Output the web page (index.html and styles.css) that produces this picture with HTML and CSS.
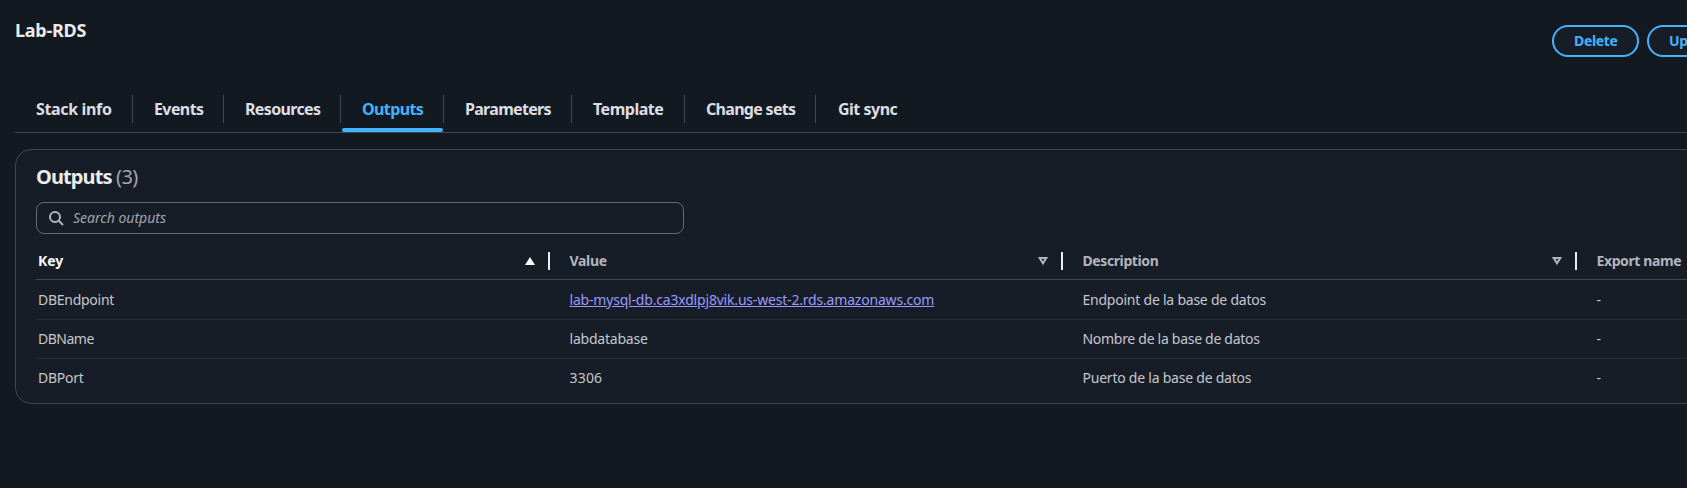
FILE: index.html
```html
<!DOCTYPE html>
<html lang="en">
<head>
<meta charset="utf-8">
<title>Lab-RDS</title>
<link rel="stylesheet" href="styles.css">
</head>
<body>
<main class="page">
  <header class="stack-header">
    <h1 class="stack-title">Lab-RDS</h1>
    <div class="actions">
      <button class="btn">Delete</button>
      <button class="btn">Update</button>
    </div>
  </header>
  <nav class="tabs">
    <a class="tab tab-info">Stack info</a>
    <a class="tab tab-events">Events</a>
    <a class="tab tab-resources">Resources</a>
    <a class="tab tab-outputs active">Outputs</a>
    <a class="tab tab-parameters">Parameters</a>
    <a class="tab tab-template">Template</a>
    <a class="tab tab-changes">Change sets</a>
    <a class="tab tab-git">Git sync</a>
  </nav>
  <section class="panel">
    <h2 class="panel-title">Outputs <span class="counter">(3)</span></h2>
    <div class="search">
      <svg class="search-icon" viewBox="0 0 16 16"><circle cx="7" cy="7" r="5"/><path d="m15 15-4.5-4.5"/></svg>
      <span class="placeholder">Search outputs</span>
    </div>
    <div class="table">
      <div class="row head">
        <div class="cell sorted"><span class="h-key">Key</span><svg class="sort filled" viewBox="0 0 10 8"><path d="M5 0 10 8H0z"/></svg></div>
        <div class="cell"><span class="h-value">Value</span><svg class="sort" viewBox="0 0 10 8"><path d="M1.7 1h6.6L5 6.3z"/></svg></div>
        <div class="cell"><span class="h-desc">Description</span><svg class="sort" viewBox="0 0 10 8"><path d="M1.7 1h6.6L5 6.3z"/></svg></div>
        <div class="cell"><span class="h-export">Export name</span></div>
      </div>
      <div class="row">
        <div class="cell"><span class="k1">DBEndpoint</span></div>
        <div class="cell"><a class="link">lab-mysql-db.ca3xdlpj8vik.us-west-2.rds.amazonaws.com</a></div>
        <div class="cell"><span class="d1">Endpoint de la base de datos</span></div>
        <div class="cell">-</div>
      </div>
      <div class="row">
        <div class="cell"><span class="k2">DBName</span></div>
        <div class="cell"><span class="v2">labdatabase</span></div>
        <div class="cell"><span class="d2">Nombre de la base de datos</span></div>
        <div class="cell">-</div>
      </div>
      <div class="row">
        <div class="cell"><span class="k3">DBPort</span></div>
        <div class="cell"><span class="v3">3306</span></div>
        <div class="cell"><span class="d3">Puerto de la base de datos</span></div>
        <div class="cell">-</div>
      </div>
    </div>
  </section>
</main>
</body>
</html>
```

FILE: styles.css
```css
* { box-sizing: border-box; }
html, body { margin: 0; height: 100%; overflow: hidden; }
body { background: #131920; color: #c6c6cd; font: 14px/20px "Noto Sans", "Open Sans", sans-serif; }
.page { padding-left: 15px; white-space: nowrap; overflow: hidden; height: 488px; }
.stack-header { height: 88px; display: flex; justify-content: space-between; }
.stack-title { margin: 18px 0 0; font-size: 18px; line-height: 24px; color: #ebebf0; letter-spacing: -0.25px; }
.actions { display: flex; gap: 8px; padding-top: 25px; width: 135px; }
.btn { flex: none; height: 32px; padding: 0 20px; border: 2px solid #42b4ff; border-radius: 20px; background: #161d26; color: #42b4ff; font: bold 14px/20px "Noto Sans", sans-serif; width: 87px; letter-spacing: -0.35px; }
.tabs { display: flex; height: 45px; padding-top: 7px; border-bottom: 1px solid #424650; }
.tab { position: relative; height: 37px; padding-left: 21px; font-size: 16px; line-height: 29px; font-weight: bold; color: #dedee3; letter-spacing: -0.5px; }
.tab::after { content: ""; position: absolute; right: 0; top: 0; width: 1px; height: 28px; background: #424650; }
.tab-git::after { display: none; }
.tab.active { color: #42b4ff; }
.tab.active::before { content: ""; position: absolute; left: 1px; right: 1px; bottom: 0; height: 4px; border-radius: 2px; background: #42b4ff; }
.tab-info { width: 118px; letter-spacing: -0.35px; }
.tab-events { width: 91px; letter-spacing: -0.6px; }
.tab-resources { width: 117px; letter-spacing: -0.65px; }
.tab-outputs { width: 103px; letter-spacing: -0.6px; }
.tab-parameters { width: 128px; letter-spacing: -0.7px; }
.tab-template { width: 113px; }
.tab-changes { width: 131px; letter-spacing: -0.7px; }
.tab-git { padding-left: 22px; }
.panel { margin: 16px -30px 0 0; height: 255px; padding: 15px 0 0 20px; border: 1px solid #424650; border-radius: 16px; background: #161d26; }
.panel-title { margin: 0; font-size: 20px; line-height: 24px; color: #ebebf0; letter-spacing: -0.9px; }
.counter { font-weight: normal; color: #a4a4ad; letter-spacing: -0.5px; }
.search { display: flex; align-items: center; width: 648px; height: 32px; margin-top: 13px; padding-left: 11px; border: 1px solid #656871; border-radius: 8px; }
.search-icon { width: 16px; height: 16px; fill: none; stroke: #b4b4bb; stroke-width: 2; }
.placeholder { margin-left: 9px; font-style: italic; color: #a4a4ad; }
.row { display: grid; grid-template-columns: 512px 513px 514px 200px; height: 39px; border-bottom: 1px solid #232b37; }
.row.head { height: 46px; border-color: #424650; font-weight: bold; color: #b4b4bb; }
.head + .row { height: 40px; }
.row:last-child { border: 0; height: 38px; }
.cell { display: flex; align-items: center; padding-left: 21.5px; }
.cell:first-child { padding-left: 2px; }
.head .cell { justify-content: space-between; padding-right: 13px; position: relative; padding-top: 8px; }
.head .cell:not(:last-child)::after { content: ""; position: absolute; right: -2px; top: 18px; width: 2px; height: 18px; background: #ebebf0; }
.sorted { color: #f9f9fa; }
.sort { width: 10px; height: 8px; fill: none; stroke: #b4b4bb; stroke-width: 2; }
.sort.filled { fill: #f9f9fa; stroke: none; }
.link { color: #9999ff; text-decoration: underline; letter-spacing: -0.19px; }
.h-value { letter-spacing: -0.3px; }
.h-desc, .h-export { letter-spacing: -0.4px; }
.k1, .k3 { letter-spacing: -0.27px; }
.k2 { letter-spacing: -0.5px; }
.v2 { letter-spacing: -0.22px; }
.v3 { letter-spacing: 0.2px; }
.d1, .d3 { letter-spacing: -0.23px; }
.d2 { letter-spacing: -0.29px; }
```
